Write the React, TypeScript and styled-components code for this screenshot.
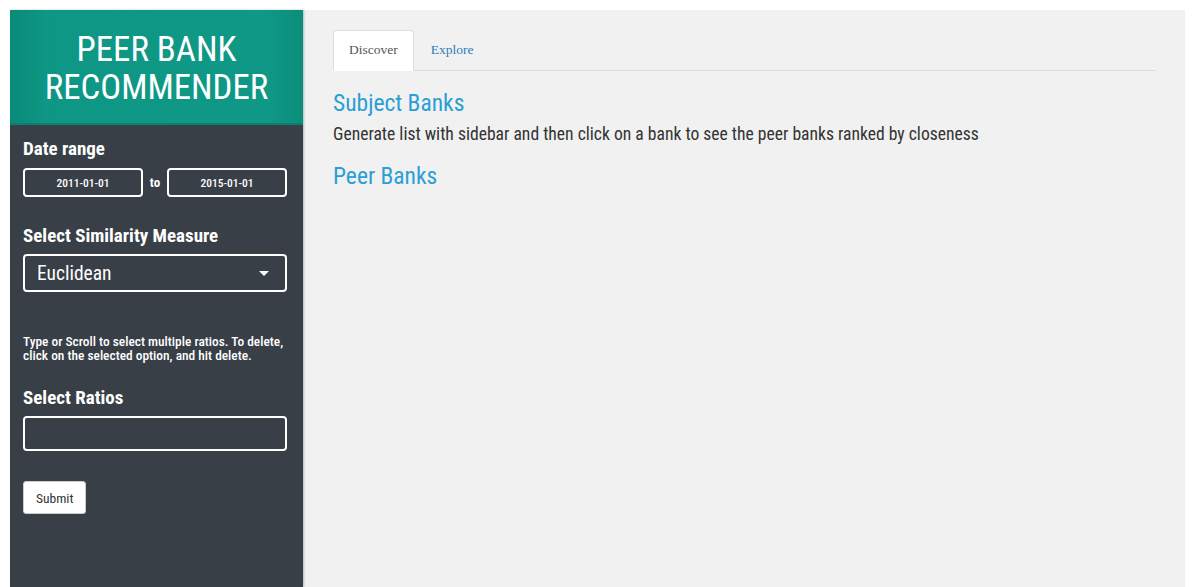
import styled, { createGlobalStyle } from 'styled-components';

const GlobalStyle = createGlobalStyle`
  html, body {
    margin: 0;
    padding: 0;
    background: #ffffff;
  }
  * {
    box-sizing: border-box;
  }
  body {
    font-family: "Roboto Condensed", "Liberation Sans Narrow", Roboto, sans-serif;
  }
`;

const Page = styled.div`
  display: flex;
  height: 100vh;
  padding: 10px 15px 0 10px;
`;

const Sidebar = styled.aside`
  width: 293px;
  flex-shrink: 0;
  display: flex;
  flex-direction: column;
  background: #383f47;
  box-shadow: 1px 0 2px rgba(0, 0, 0, 0.25);
  z-index: 1;
`;

const Brand = styled.div`
  height: 115px;
  display: flex;
  align-items: center;
  justify-content: center;
  text-align: center;
  background: linear-gradient(90deg, #0a8a78 0%, #0d9784 12%, #0e9885 88%, #0b8e7c 100%);
  border-bottom: 2px solid #107e6e;
  color: #ffffff;
  font-size: 34.8px;
  line-height: 38px;
  padding-top: 2px;
`;

const SideBody = styled.div`
  padding: 12px 16px 0 13px;
  color: #ffffff;
`;

const Label = styled.div<{ $top?: number }>`
  font-weight: 700;
  font-size: 19px;
  line-height: 24px;
  margin-top: ${(p) => p.$top ?? 0}px;
`;

const DateRow = styled.div`
  display: flex;
  align-items: center;
  gap: 6px;
  margin-top: 7px;
`;

const DateBox = styled.div`
  flex: 1;
  height: 29px;
  border: 2px solid #ffffff;
  border-radius: 4px;
  display: flex;
  align-items: center;
  justify-content: center;
  font-size: 11.5px;
  font-weight: 500;
`;

const To = styled.span`
  font-weight: 700;
  font-size: 13px;
  padding: 0 1px;
`;

const SelectBox = styled.div`
  margin-top: 6px;
  height: 38px;
  border: 2px solid #ffffff;
  border-radius: 4px;
  display: flex;
  align-items: center;
  justify-content: space-between;
  padding: 0 16px 0 12px;
  font-size: 19.5px;
`;

const Caret = styled.span`
  width: 0;
  height: 0;
  border-left: 5px solid transparent;
  border-right: 5px solid transparent;
  border-top: 5px solid #ffffff;
`;

const Help = styled.p`
  margin: 43px 0 0;
  font-size: 13.4px;
  font-weight: 500;
  line-height: 14px;
`;

const TextBox = styled.div`
  margin-top: 6px;
  height: 35px;
  border: 2px solid #ffffff;
  border-radius: 4px;
`;

const SubmitButton = styled.button`
  margin-top: 30px;
  height: 33px;
  padding: 0 12px;
  background: #ffffff;
  color: #333333;
  border: 1px solid #cccccc;
  border-radius: 3px;
  font-family: inherit;
  font-size: 13.5px;
`;

const Main = styled.main`
  flex: 1;
  background: #f1f1f1;
  padding: 20px 29px 0 30px;
`;

const Tabs = styled.div`
  display: flex;
  border-bottom: 1px solid #dddddd;
  height: 41px;
`;

const Tab = styled.div<{ $active?: boolean }>`
  height: 41px;
  padding: 0 15px 1px;
  margin-right: 1px;
  display: flex;
  align-items: center;
  font-family: "Liberation Serif", serif;
  font-size: 13.5px;
  color: ${(p) => (p.$active ? '#555555' : '#337ab7')};
  background: ${(p) => (p.$active ? '#ffffff' : 'transparent')};
  border: 1px solid ${(p) => (p.$active ? '#dddddd' : 'transparent')};
  border-bottom-color: ${(p) => (p.$active ? '#ffffff' : 'transparent')};
  border-radius: 4px 4px 0 0;
`;

const Heading = styled.h3<{ $top: number }>`
  margin: ${(p) => p.$top}px 0 0;
  font-weight: 400;
  font-size: 23.5px;
  line-height: 28px;
  color: #2a9fd6;
`;

const Text = styled.p`
  margin: 6px 0 0;
  font-size: 17.6px;
  line-height: 23px;
  color: #333333;
`;

export default function App() {
  return (
    <>
      <GlobalStyle />
      <Page>
        <Sidebar>
          <Brand>
            PEER BANK
            <br />
            RECOMMENDER
          </Brand>
          <SideBody>
            <Label>Date range</Label>
            <DateRow>
              <DateBox>2011-01-01</DateBox>
              <To>to</To>
              <DateBox>2015-01-01</DateBox>
            </DateRow>
            <Label $top={27}>Select Similarity Measure</Label>
            <SelectBox>
              <span>Euclidean</span>
              <Caret />
            </SelectBox>
            <Help>
              Type or Scroll to select multiple ratios. To delete, click on the selected option, and hit delete.
            </Help>
            <Label $top={23}>Select Ratios</Label>
            <TextBox />
            <SubmitButton>Submit</SubmitButton>
          </SideBody>
        </Sidebar>
        <Main>
          <Tabs>
            <Tab $active>Discover</Tab>
            <Tab>Explore</Tab>
          </Tabs>
          <Heading $top={18}>Subject Banks</Heading>
          <Text>Generate list with sidebar and then click on a bank to see the peer banks ranked by closeness</Text>
          <Heading $top={16}>Peer Banks</Heading>
        </Main>
      </Page>
    </>
  );
}
